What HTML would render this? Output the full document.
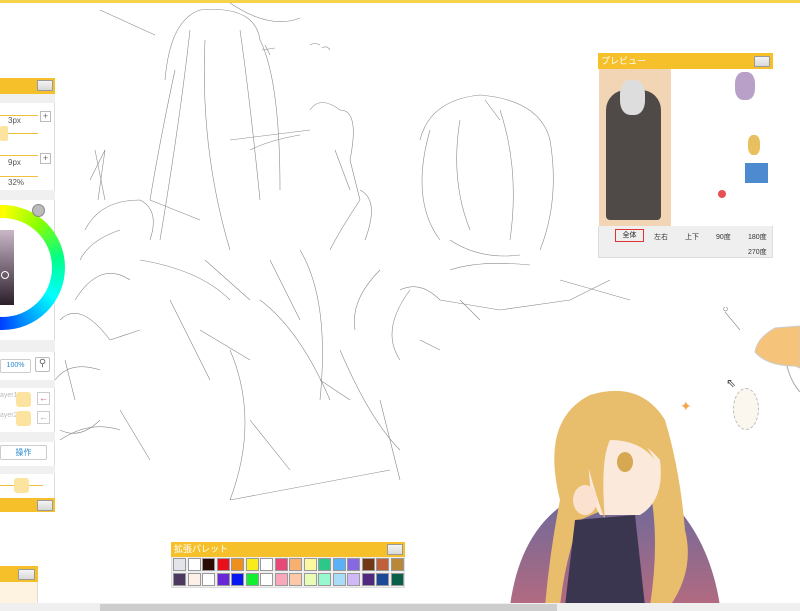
<!DOCTYPE html>
<html><head><meta charset="utf-8"><style>
*{margin:0;padding:0;box-sizing:border-box}
body{width:800px;height:611px;overflow:hidden;background:#fff;position:relative;font-family:"Liberation Sans","Noto Sans CJK JP",sans-serif}
.abs{position:absolute}
.hd{background:#f6c02a;color:#fff;font-size:9px;line-height:16px;padding-left:3px}
.btn{position:absolute;width:16px;height:11px;border:1px solid #999;background:linear-gradient(#f4f4f4,#d8d8d8);border-radius:1px}
.sw{display:inline-block;width:13px;height:13px;border:1px solid #999;margin-right:1.5px;vertical-align:top}
.lbl{font-size:8px;color:#555}
</style></head><body>
<div class="abs" style="left:0;top:0;width:800px;height:3px;background:#f6d24a"></div>

<svg class="abs" style="left:0;top:0" width="800" height="611" fill="none" stroke="#8a8a8a" stroke-width="0.6">
<path d="M100 10 L155 35 M230 3 Q270 30 300 18 M310 45 q5 -3 10 0 M322 48 q5 -3 8 2"/>
<path d="M165 80 Q170 20 200 10 Q255 5 260 40 Q280 80 280 190 M175 70 Q160 140 150 200 M190 30 Q180 120 160 240 M205 40 Q200 150 230 250 M240 30 Q250 100 260 200 M230 140 L310 130 M250 150 Q270 140 300 135"/>
<path d="M265 45 L270 55 M262 50 L275 48"/>
<path d="M95 150 L105 200 M85 230 Q100 200 140 200 Q160 210 150 240 M80 260 Q90 240 120 230 M75 300 Q100 260 130 280 M60 320 Q80 300 110 340 L140 330 M55 380 Q70 360 100 370 M60 440 Q90 420 120 430 M120 410 L150 460"/>
<path d="M140 260 Q200 270 230 300 M170 300 L210 380 M230 350 Q260 420 230 500 M260 300 Q300 330 330 400 M300 250 Q330 300 320 400 M340 350 Q370 420 400 450 M380 400 L400 480 M230 500 L390 470"/>
<path d="M310 110 Q320 95 340 110 Q360 110 350 160 L360 200 Q340 230 330 250 M335 150 L350 190 M360 190 Q380 200 365 240"/>
<path d="M420 140 Q430 100 480 95 Q540 100 550 140 Q560 200 540 250 M430 130 Q410 200 440 240 M460 120 Q450 180 470 230 M500 110 Q520 170 510 240 M485 100 L500 120 M450 240 Q480 260 520 255"/>
<path d="M450 270 Q480 260 530 265 M400 290 Q420 280 440 300 L500 310 L570 300 L610 280 M560 280 L630 300 M460 300 L480 320 M420 340 L440 350 M320 380 L350 400 M150 200 L200 220"/>
<path d="M410 290 Q380 330 400 360 M380 270 Q350 300 355 330 M200 330 L250 360 M270 260 L300 320 M250 420 L290 470"/>
<path d="M90 180 L105 150 L98 200 M205 260 L250 300 M100 420 Q80 440 60 430 M65 360 L75 400"/>
<path d="M725 312 L740 330 M725 307 a2 2 0 1 0 1 0"/>
</svg>

<!-- fish -->
<svg class="abs" style="left:745px;top:320px" width="55" height="80">
<path d="M30 8 Q12 18 10 32 Q22 46 50 46 L55 48 L55 6 Z" fill="#f5c37a" stroke="#ccc"/>
<path d="M42 46 Q46 62 55 72" stroke="#aaa" fill="none"/>
</svg>
<div class="abs" style="left:733px;top:388px;width:26px;height:42px;border-radius:50%;background:#fbf7ee;border:1px dashed #bbb"></div>
<div class="abs" style="left:680px;top:398px;color:#f1a64a;font-size:14px">✦</div>
<div class="abs" style="left:726px;top:376px;font-size:12px;color:#444">⇖</div>

<!-- girl -->
<svg class="abs" style="left:490px;top:380px" width="240" height="226">
<defs><linearGradient id="hg" x1="0" y1="0" x2="0" y2="1"><stop offset="0" stop-color="#6f6a9a"/><stop offset="1" stop-color="#b36a80"/></linearGradient></defs>
<path d="M20 226 Q30 150 80 120 L180 120 Q220 160 230 226 Z" fill="url(#hg)"/>
<path d="M70 120 Q50 40 100 15 Q150 0 175 40 Q190 90 195 150 Q205 190 180 226 L160 226 Q170 160 160 110 L90 140 Q75 180 70 226 L55 226 Q60 170 70 120Z" fill="#e8bd6c"/>
<path d="M100 60 Q140 45 170 80 Q175 120 150 135 L110 135 Q95 110 100 60Z" fill="#fbe9dc"/>
<ellipse cx="95" cy="120" rx="12" ry="15" fill="#fbe1cf"/>
<path d="M90 50 Q110 30 140 40 L165 80 Q150 60 120 60 Q110 80 115 140 Q100 100 90 50Z" fill="#e8bd6c"/>
<ellipse cx="135" cy="82" rx="8" ry="10" fill="#d6a852"/>
<path d="M85 140 L145 135 L155 226 L75 226 Z" fill="#3b3650"/>
</svg>

<!-- left panel -->
<div class="abs" style="left:0;top:78px;width:55px;height:434px;background:#fff;border-right:1px solid #ddd"></div>
<div class="abs hd" style="left:0;top:78px;width:55px;height:16px"></div>
<div class="btn" style="left:37px;top:80px"></div>
<div class="abs" style="left:0;top:94px;width:55px;height:9px;background:#f0f0f0"></div>
<div class="abs" style="left:0;top:115px;width:38px;height:1px;background:#f0c040"></div>
<div class="abs lbl" style="left:8px;top:116px">3px</div>
<div class="abs" style="left:0;top:133px;width:38px;height:1px;background:#f0c040"></div>
<div class="abs" style="left:0;top:126px;width:8px;height:15px;background:#fde3a0;border-radius:2px"></div>
<div class="abs" style="left:40px;top:111px;width:11px;height:11px;border:1px solid #bbb;font-size:9px;line-height:9px;text-align:center;color:#666">+</div>
<div class="abs" style="left:0;top:155px;width:38px;height:1px;background:#f0c040"></div>
<div class="abs lbl" style="left:8px;top:158px">9px</div>
<div class="abs" style="left:40px;top:153px;width:11px;height:11px;border:1px solid #bbb;font-size:9px;line-height:9px;text-align:center;color:#666">+</div>
<div class="abs" style="left:0;top:176px;width:38px;height:1px;background:#f0c040"></div>
<div class="abs lbl" style="left:8px;top:178px">32%</div>
<div class="abs" style="left:0;top:190px;width:55px;height:10px;background:#f0f0f0"></div>
<div class="abs" style="left:-60px;top:205px;width:125px;height:125px;border-radius:50%;background:conic-gradient(from 0deg,#ff0,#8f0,#0f8,#0ff,#08f,#00f,#f0f,#f00,#f80,#ff0)"></div>
<div class="abs" style="left:-47px;top:218px;width:99px;height:99px;border-radius:50%;background:#fff"></div>
<div class="abs" style="left:0;top:230px;width:14px;height:75px;background:linear-gradient(#c9b6c7,#2a1f2a)"></div>
<div class="abs" style="left:1px;top:271px;width:8px;height:8px;border-radius:50%;border:1px solid #fff"></div>
<div class="abs" style="left:32px;top:204px;width:13px;height:13px;border-radius:50%;background:#bbb;border:1px solid #888"></div>
<div class="abs" style="left:0;top:340px;width:55px;height:12px;background:#f0f0f0"></div>
<div class="abs" style="left:0;top:359px;width:31px;height:14px;border:1px solid #ccc;border-radius:2px;font-size:7px;color:#2a8ad0;text-align:center;line-height:12px">100%</div>
<div class="abs" style="left:35px;top:357px;width:15px;height:15px;border:1px solid #bbb;border-radius:2px;font-size:10px;text-align:center;color:#666">⚲</div>
<div class="abs" style="left:0;top:380px;width:55px;height:8px;background:#f0f0f0"></div>
<div class="abs" style="left:0;top:392px;font-size:7px;color:#bbb">ayer1</div>
<div class="abs" style="left:16px;top:392px;width:15px;height:15px;background:#fde3a0;border-radius:3px"></div>
<div class="abs" style="left:37px;top:392px;width:13px;height:13px;border:1px solid #ccc;color:#e04060;font-size:9px;text-align:center;line-height:11px">←</div>
<div class="abs" style="left:0;top:412px;font-size:7px;color:#bbb">ayer2</div>
<div class="abs" style="left:16px;top:411px;width:15px;height:15px;background:#fde3a0;border-radius:3px"></div>
<div class="abs" style="left:37px;top:411px;width:13px;height:13px;border:1px solid #ccc;color:#aaa;font-size:9px;text-align:center;line-height:11px">←</div>
<div class="abs" style="left:0;top:432px;width:55px;height:10px;background:#f0f0f0"></div>
<div class="abs" style="left:0;top:445px;width:47px;height:15px;border:1px solid #ccc;border-radius:2px;font-size:8px;color:#2a8ad0;text-align:center;line-height:13px">操作</div>
<div class="abs" style="left:0;top:466px;width:55px;height:8px;background:#f0f0f0"></div>
<div class="abs" style="left:0;top:485px;width:43px;height:1px;background:#f0c040"></div>
<div class="abs" style="left:14px;top:478px;width:15px;height:15px;background:#fde3a0;border-radius:3px"></div>
<div class="abs hd" style="left:0;top:498px;width:55px;height:14px"></div>
<div class="btn" style="left:37px;top:500px"></div>
<div class="abs hd" style="left:0;top:566px;width:38px;height:16px"></div>
<div class="btn" style="left:18px;top:569px;width:17px;height:11px"></div>
<div class="abs" style="left:0;top:582px;width:38px;height:22px;background:#fdf3e0;border-right:1px solid #ddd"></div>

<!-- preview -->
<div class="abs" style="left:598px;top:53px;width:175px;height:205px;background:#efefef;border:1px solid #ddd"></div>
<div class="abs hd" style="left:598px;top:53px;width:175px;height:16px">プレビュー</div>
<div class="btn" style="left:754px;top:56px"></div>
<div class="abs" style="left:598px;top:69px;width:175px;height:157px;background:#fff"></div>
<div class="abs" style="left:599px;top:69px;width:72px;height:157px;background:#f1d5b4"></div>
<div class="abs" style="left:606px;top:90px;width:55px;height:130px;background:#4f4a47;border-radius:20px 20px 4px 4px"></div>
<div class="abs" style="left:620px;top:80px;width:25px;height:35px;background:#ddd;border-radius:40%"></div>
<div class="abs" style="left:735px;top:72px;width:20px;height:28px;background:#b9a0c8;border-radius:40%"></div>
<div class="abs" style="left:745px;top:163px;width:23px;height:20px;background:#4e8ad0"></div>
<div class="abs" style="left:748px;top:135px;width:12px;height:20px;background:#e8c060;border-radius:40%"></div>
<div class="abs" style="left:718px;top:190px;width:8px;height:8px;background:#e65050;border-radius:50%"></div>
<div class="abs" style="left:615px;top:229px;width:29px;height:13px;border:1px solid #d33;font-size:7px;text-align:center;line-height:11px;color:#222">全体</div>
<div class="abs" style="left:654px;top:232px;font-size:7px;color:#333">左右</div>
<div class="abs" style="left:685px;top:232px;font-size:7px;color:#333">上下</div>
<div class="abs" style="left:716px;top:232px;font-size:7px;color:#333">90度</div>
<div class="abs" style="left:748px;top:232px;font-size:7px;color:#333">180度</div>
<div class="abs" style="left:748px;top:247px;font-size:7px;color:#333">270度</div>

<!-- palette -->
<div class="abs" style="left:171px;top:542px;width:234px;height:46px;background:#eee;border:1px solid #ddd"></div>
<div class="abs hd" style="left:171px;top:542px;width:234px;height:15px;line-height:15px">拡張パレット</div>
<div class="btn" style="left:387px;top:544px;width:16px;height:11px"></div>
<div class="abs" style="left:173px;top:558px;width:234px;font-size:0;line-height:0">
<span class="sw" style="background:#e3e3ea"></span><span class="sw" style="background:#fff"></span><span class="sw" style="background:#2a0c04"></span><span class="sw" style="background:#e8101c"></span><span class="sw" style="background:#f0901c"></span><span class="sw" style="background:#f8ec1c"></span><span class="sw" style="background:#fff"></span><span class="sw" style="background:#e84878"></span><span class="sw" style="background:#f8b070"></span><span class="sw" style="background:#fcf8a0"></span><span class="sw" style="background:#2cc888"></span><span class="sw" style="background:#5cb0f8"></span><span class="sw" style="background:#8868e0"></span><span class="sw" style="background:#703814"></span><span class="sw" style="background:#c06038"></span><span class="sw" style="background:#b88838"></span>
</div>
<div class="abs" style="left:173px;top:573px;width:234px;font-size:0;line-height:0">
<span class="sw" style="background:#4c3860"></span><span class="sw" style="background:#fdf0e8"></span><span class="sw" style="background:#fff"></span><span class="sw" style="background:#6828d8"></span><span class="sw" style="background:#0818f0"></span><span class="sw" style="background:#10f030"></span><span class="sw" style="background:#fff"></span><span class="sw" style="background:#f8a8b8"></span><span class="sw" style="background:#fcc8a8"></span><span class="sw" style="background:#e8fcb8"></span><span class="sw" style="background:#98f8d0"></span><span class="sw" style="background:#a8dcf8"></span><span class="sw" style="background:#d0b8f8"></span><span class="sw" style="background:#502880"></span><span class="sw" style="background:#1c4898"></span><span class="sw" style="background:#086048"></span>
</div>

<!-- scrollbar -->
<div class="abs" style="left:0;top:603px;width:800px;height:8px;background:#efefef"></div>
<div class="abs" style="left:100px;top:604px;width:457px;height:7px;background:#cdcdcd"></div>
</body></html>
